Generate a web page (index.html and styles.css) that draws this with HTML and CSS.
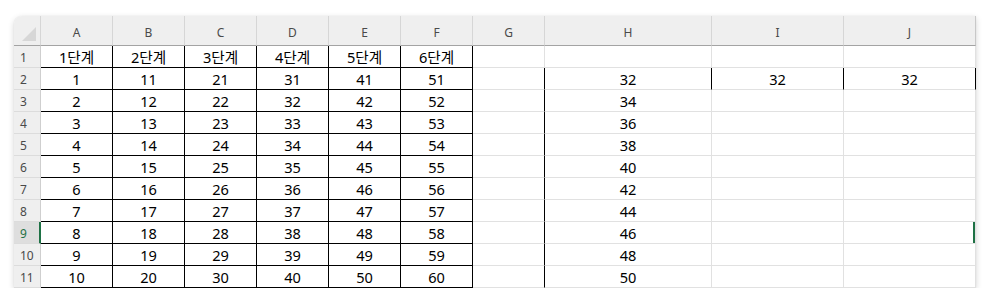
FILE: index.html
```html
<!DOCTYPE html>
<html lang="ko">
<head>
<meta charset="utf-8">
<link rel="stylesheet" href="styles.css">
</head>
<body>
<div class="sheet">
  <div class="corner"><span class="tri"></span></div>
  <div class="ch">A</div><div class="ch">B</div><div class="ch">C</div><div class="ch">D</div><div class="ch">E</div><div class="ch">F</div><div class="ch">G</div><div class="ch">H</div><div class="ch">I</div><div class="ch last">J</div>

  <div class="rh">1</div>
  <div class="c t">1단계</div><div class="c t">2단계</div><div class="c t">3단계</div><div class="c t">4단계</div><div class="c t">5단계</div><div class="c t">6단계</div><div class="c"></div><div class="c"></div><div class="c"></div><div class="c"></div>

  <div class="rh">2</div>
  <div class="c t">1</div><div class="c t">11</div><div class="c t">21</div><div class="c t">31</div><div class="c t">41</div><div class="c t">51</div><div class="c br"></div><div class="c br">32</div><div class="c br">32</div><div class="c br">32</div>

  <div class="rh">3</div>
  <div class="c t">2</div><div class="c t">12</div><div class="c t">22</div><div class="c t">32</div><div class="c t">42</div><div class="c t">52</div><div class="c br"></div><div class="c">34</div><div class="c"></div><div class="c"></div>

  <div class="rh">4</div>
  <div class="c t">3</div><div class="c t">13</div><div class="c t">23</div><div class="c t">33</div><div class="c t">43</div><div class="c t">53</div><div class="c br"></div><div class="c">36</div><div class="c"></div><div class="c"></div>

  <div class="rh">5</div>
  <div class="c t">4</div><div class="c t">14</div><div class="c t">24</div><div class="c t">34</div><div class="c t">44</div><div class="c t">54</div><div class="c br"></div><div class="c">38</div><div class="c"></div><div class="c"></div>

  <div class="rh">6</div>
  <div class="c t">5</div><div class="c t">15</div><div class="c t">25</div><div class="c t">35</div><div class="c t">45</div><div class="c t">55</div><div class="c br"></div><div class="c">40</div><div class="c"></div><div class="c"></div>

  <div class="rh">7</div>
  <div class="c t">6</div><div class="c t">16</div><div class="c t">26</div><div class="c t">36</div><div class="c t">46</div><div class="c t">56</div><div class="c br"></div><div class="c">42</div><div class="c"></div><div class="c"></div>

  <div class="rh">8</div>
  <div class="c t">7</div><div class="c t">17</div><div class="c t">27</div><div class="c t">37</div><div class="c t">47</div><div class="c t">57</div><div class="c br"></div><div class="c">44</div><div class="c"></div><div class="c"></div>

  <div class="rh sel">9</div>
  <div class="c t">8</div><div class="c t">18</div><div class="c t">28</div><div class="c t">38</div><div class="c t">48</div><div class="c t">58</div><div class="c br"></div><div class="c">46</div><div class="c"></div><div class="c mark"></div>

  <div class="rh">10</div>
  <div class="c t">9</div><div class="c t">19</div><div class="c t">29</div><div class="c t">39</div><div class="c t">49</div><div class="c t">59</div><div class="c br"></div><div class="c">48</div><div class="c"></div><div class="c"></div>

  <div class="rh">11</div>
  <div class="c t">10</div><div class="c t">20</div><div class="c t">30</div><div class="c t">40</div><div class="c t">50</div><div class="c t">60</div><div class="c br"></div><div class="c">50</div><div class="c"></div><div class="c"></div>
</div>
</body>
</html>
```
FILE: styles.css
```css
html, body {
  margin: 0;
  padding: 0;
  background: #ffffff;
}
body {
  padding: 16px 0 0 14px;
  font-family: "Noto Sans", "Noto Sans CJK KR", sans-serif;
}
.sheet {
  display: grid;
  grid-template-columns: 27px repeat(7, 72px) 167px 132px 132px;
  grid-template-rows: 30px repeat(11, 22px);
  width: 962px;
  background: #ffffff;
  border-top-left-radius: 8px;
  overflow: hidden;
  box-shadow: 0 2px 6px rgba(0, 0, 0, 0.16), 0 0 1px rgba(0, 0, 0, 0.12);
}
.corner,
.ch,
.rh {
  background: #efefef;
  box-sizing: border-box;
  display: flex;
  align-items: center;
  justify-content: center;
  color: #4a4a4a;
  font-family: "Noto Sans", sans-serif;
  font-size: 12px;
}
.corner {
  position: relative;
  border-right: 1px solid #d6d6d6;
  border-bottom: 1px solid #a3a3a3;
}
.tri {
  position: absolute;
  right: 4px;
  bottom: 4px;
  width: 0;
  height: 0;
  border-left: 14px solid transparent;
  border-bottom: 14px solid #d7d7d7;
}
.ch {
  border-right: 1px solid #d6d6d6;
  border-bottom: 1px solid #a3a3a3;
  padding-top: 3px;
}
.ch.last {
  border-right-color: #c8c8c8;
}
.rh {
  border-right: 1px solid #cfcfcf;
  border-bottom: 1px solid #dcdcdc;
  justify-content: flex-start;
  padding-left: 6px;
  padding-top: 1px;
}
.rh.sel {
  background: #dedede;
  color: #1e7145;
  border-right: 2px solid #1e7145;
}
.c {
  box-sizing: border-box;
  border-right: 1px solid #e1e1e1;
  border-bottom: 1px solid #e1e1e1;
  display: flex;
  align-items: center;
  justify-content: center;
  font-size: 14.6px;
  line-height: 1;
  color: #000000;
  padding-top: 1px;
}
.c.t {
  border-right-color: #000000;
  border-bottom-color: #000000;
}
.c.br {
  border-right-color: #000000;
}
.c.mark {
  box-shadow: inset -2px 0 0 #1e7145;
}
```
